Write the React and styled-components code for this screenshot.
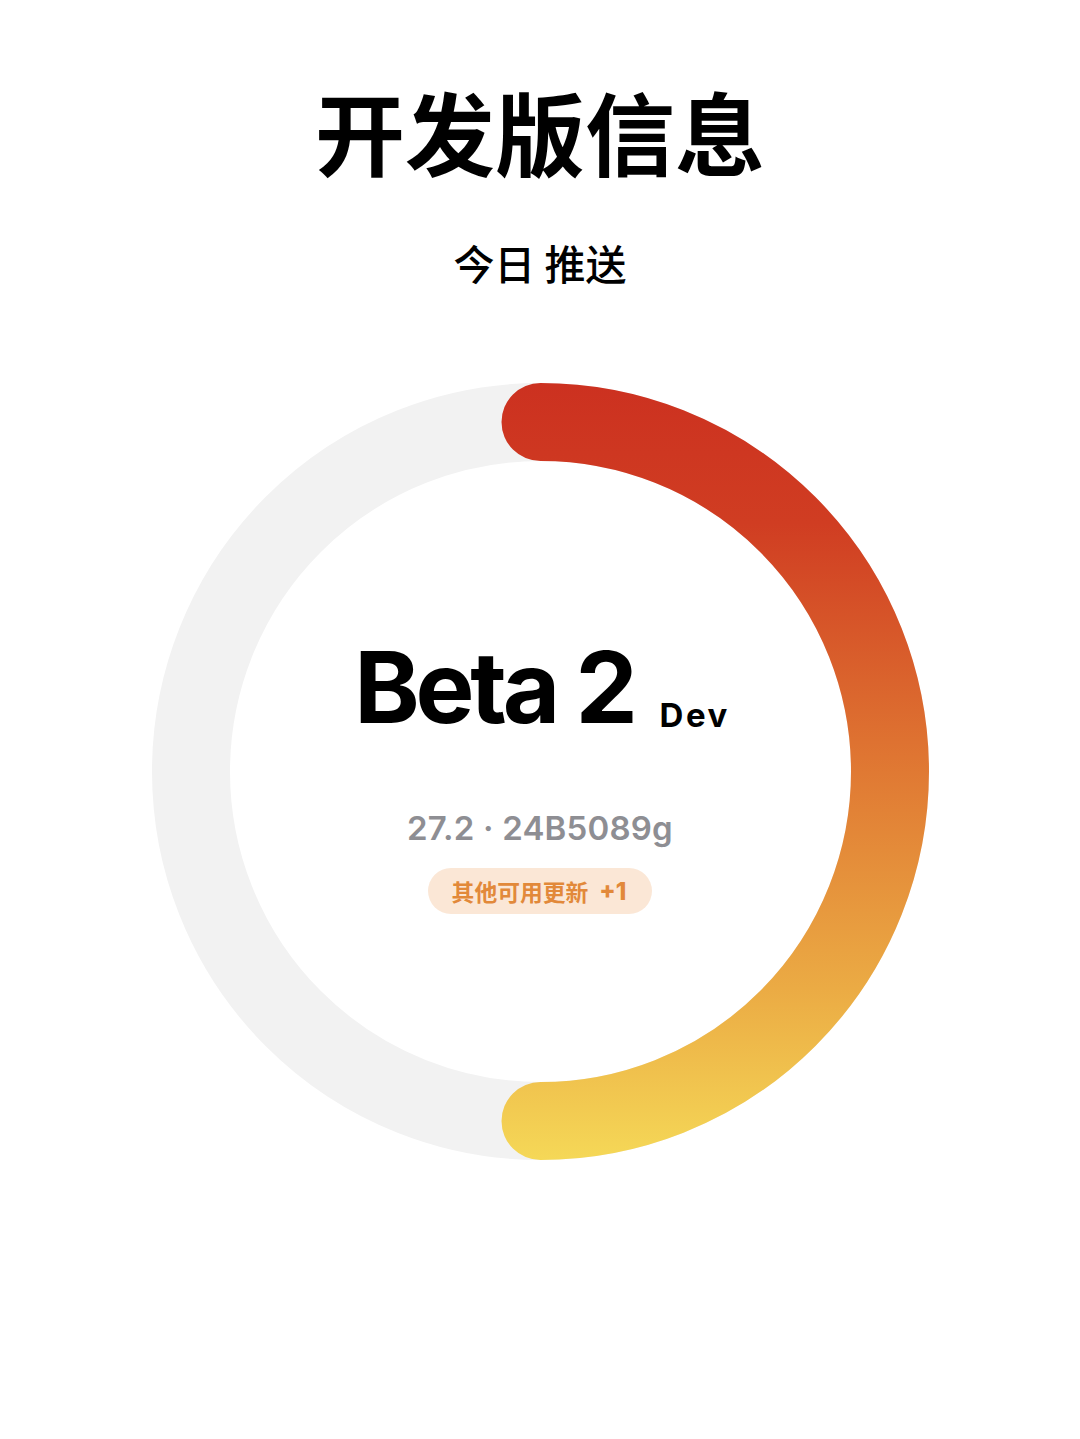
import React from "react";
import styled, { createGlobalStyle } from "styled-components";

const Global = createGlobalStyle`
  html, body { margin: 0; padding: 0; background: #ffffff; }
  body { font-family: Inter, "Noto Sans CJK SC", sans-serif; }
`;

const Page = styled.main`
  width: 1080px;
  height: 1439px;
  display: flex;
  flex-direction: column;
  align-items: center;
  background: #ffffff;
  overflow: hidden;
`;

const Title = styled.h1`
  margin: 85px 0 0;
  font-family: "Noto Sans CJK SC", sans-serif;
  font-weight: 700;
  font-size: 90px;
  line-height: 90px;
  color: #000000;
  letter-spacing: 0;
`;

const Subtitle = styled.h2`
  margin: 67px 0 0;
  font-family: "Noto Sans CJK SC", sans-serif;
  font-weight: 500;
  font-size: 41px;
  line-height: 40px;
  color: #000000;
  white-space: pre;
`;

const RingWrap = styled.section`
  position: relative;
  margin-top: 101px;
  width: 777px;
  height: 777px;
`;

const RingSvg = styled.svg`
  display: block;
  width: 777px;
  height: 777px;
`;

const Center = styled.div`
  position: absolute;
  inset: 0;
  display: flex;
  flex-direction: column;
  align-items: center;
  padding-top: 255px;
`;

const HeadRow = styled.div`
  display: flex;
  align-items: baseline;
  gap: 26px;
  margin-left: 4px;
`;

const Big = styled.span`
  font-family: Inter, sans-serif;
  font-weight: 700;
  font-size: 99px;
  line-height: 99px;
  letter-spacing: -4.2px;
  color: #000000;
`;

const Tag = styled.span`
  font-family: Inter, sans-serif;
  font-weight: 700;
  font-size: 33px;
  line-height: 33px;
  letter-spacing: 2.5px;
  color: #000000;
  position: relative;
  top: 4px;
`;

const Version = styled.div`
  margin-top: 75px;
  font-family: Inter, sans-serif;
  font-weight: 600;
  font-size: 33px;
  line-height: 33px;
  color: #8e8e93;
  letter-spacing: 0.2px;
`;

const Badge = styled.div`
  margin-top: 23px;
  height: 46px;
  padding: 0 26px 0 24px;
  border-radius: 23px;
  background: #fbe7d6;
  display: flex;
  align-items: center;
  gap: 11px;
  color: #e2893a;
  font-family: "Noto Sans CJK SC", sans-serif;
  font-weight: 700;
  font-size: 22.8px;
`;

const Plus = styled.span`
  font-family: Inter, sans-serif;
  font-weight: 800;
  font-size: 24px;
`;

function Ring() {
  const c = 388.5;
  const r = 349.5;
  return (
    <RingSvg viewBox="0 0 777 777">
      <defs>
        <linearGradient id="arcGrad" x1="0" y1="0" x2="0" y2="777" gradientUnits="userSpaceOnUse">
          <stop offset="0" stopColor="#cc3120" />
          <stop offset="0.18" stopColor="#d03d22" />
          <stop offset="0.5" stopColor="#e07933" />
          <stop offset="0.78" stopColor="#ebab44" />
          <stop offset="1" stopColor="#f5d857" />
        </linearGradient>
      </defs>
      <circle cx={c} cy={c} r={r} fill="none" stroke="#f2f2f2" strokeWidth="78" />
      <path
        d={`M ${c} ${c - r} A ${r} ${r} 0 0 1 ${c} ${c + r}`}
        fill="none"
        stroke="url(#arcGrad)"
        strokeWidth="78"
        strokeLinecap="round"
      />
    </RingSvg>
  );
}

export default function App() {
  return (
    <>
      <Global />
      <Page>
        <Title>开发版信息</Title>
        <Subtitle>今日 推送</Subtitle>
        <RingWrap>
          <Ring />
          <Center>
            <HeadRow>
              <Big>Beta 2</Big>
              <Tag>Dev</Tag>
            </HeadRow>
            <Version>27.2 · 24B5089g</Version>
            <Badge>
              <span>其他可用更新</span>
              <Plus>+1</Plus>
            </Badge>
          </Center>
        </RingWrap>
      </Page>
    </>
  );
}
